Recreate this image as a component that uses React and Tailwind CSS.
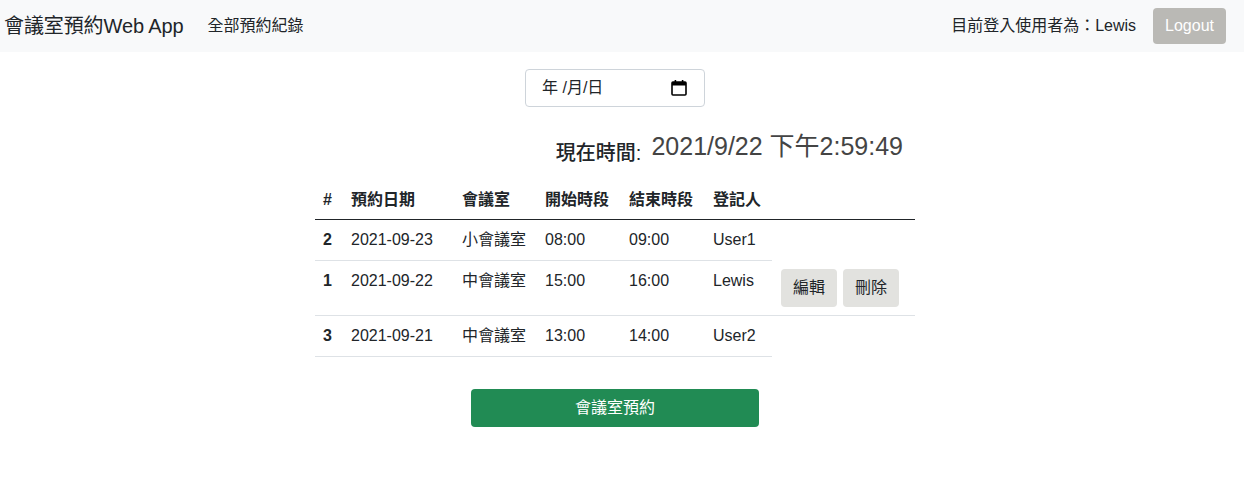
import React from "react"

const FONT = {
    fontFamily:
        '"Liberation Sans", "Noto Sans CJK TC", "Noto Sans CJK SC", sans-serif',
}

const rows = [
    { id: 2, date: "2021-09-23", room: "小會議室", start: "08:00", end: "09:00", user: "User1" },
    { id: 1, date: "2021-09-22", room: "中會議室", start: "15:00", end: "16:00", user: "Lewis", own: true },
    { id: 3, date: "2021-09-21", room: "中會議室", start: "13:00", end: "14:00", user: "User2" },
]

function CalendarIcon() {
    return (
        <svg width="18" height="18" viewBox="0 0 18 18" fill="none">
            <rect x="2" y="3" width="14" height="13" rx="1" stroke="#000" strokeWidth="1.6" />
            <rect x="2" y="3" width="14" height="3.5" fill="#000" />
            <rect x="4.6" y="1" width="1.6" height="3" fill="#000" />
            <rect x="11.8" y="1" width="1.6" height="3" fill="#000" />
        </svg>
    )
}

function Navbar() {
    return (
        <div className="h-[52px] bg-[#f8f9fa] flex items-center justify-between pl-[4px] pr-[18px]">
            <div className="flex items-center">
                <div className="text-[20px] text-[#212529] mr-[24px] tracking-[-0.1px]">會議室預約Web App</div>
                <div className="text-[16px] text-[#212529]">全部預約紀錄</div>
            </div>
            <div className="flex items-center">
                <div className="text-[16px] text-[#212529] mr-[17px]">目前登入使用者為：Lewis</div>
                <button className="h-[36px] px-[12px] rounded-[4px] bg-[#bab9b5] text-white text-[16px]">
                    Logout
                </button>
            </div>
        </div>
    )
}

export default function App() {
    const th = "text-left font-bold px-2 pt-2 pb-[7px] border-b border-[#212529] align-bottom"
    const td = "px-2 py-2 align-top border-b border-[#dee2e6]"
    return (
        <div style={FONT} className="bg-white min-h-[490px] text-[#212529]">
            <Navbar />
            <div className="flex flex-col items-center pr-[14px]">
                <div className="mt-[17px] w-[180px] h-[38px] border border-[#ced4da] rounded-[4px] flex items-center justify-between pl-[16px] pr-[16px]">
                    <span className="text-[16px]">年 /月/日</span>
                    <CalendarIcon />
                </div>
                <div className="w-[600px] flex justify-end items-end mt-[24px] pr-[12px] leading-[30px]">
                    <span className="text-[20px] font-medium mr-[10px] mb-[-7px]">現在時間:</span>
                    <span className="text-[25px] text-[#444]">2021/9/22 下午2:59:49</span>
                </div>
                <table className="w-[600px] table-fixed mt-[19px] text-[16px]">
                    <colgroup>
                        <col className="w-[28px]" />
                        <col className="w-[111px]" />
                        <col className="w-[83px]" />
                        <col className="w-[84px]" />
                        <col className="w-[84px]" />
                        <col className="w-[67px]" />
                        <col className="w-[143px]" />
                    </colgroup>
                    <thead>
                        <tr className="leading-[24px]">
                            <th className={th}>#</th>
                            <th className={th}>預約日期</th>
                            <th className={th}>會議室</th>
                            <th className={th}>開始時段</th>
                            <th className={th}>結束時段</th>
                            <th className={th}>登記人</th>
                            <th className={th}></th>
                        </tr>
                    </thead>
                    <tbody>
                        {rows.map((r) => (
                            <tr key={r.id} className="leading-[24px]">
                                <td className={td + " font-bold"}>{r.id}</td>
                                <td className={td}>{r.date}</td>
                                <td className={td}>{r.room}</td>
                                <td className={td}>{r.start}</td>
                                <td className={td}>{r.end}</td>
                                <td className={td}>{r.user}</td>
                                {r.own && (
                                    <td className="pl-[9px] py-2 border-b border-[#dee2e6] align-top">
                                        <div className="flex gap-[6px]">
                                            <button className="h-[38px] px-[12px] rounded-[4px] bg-[#e2e2df]">編輯</button>
                                            <button className="h-[38px] px-[12px] rounded-[4px] bg-[#e2e2df]">刪除</button>
                                        </div>
                                    </td>
                                )}
                            </tr>
                        ))}
                    </tbody>
                </table>
                <button className="mt-[32px] w-[288px] h-[38px] rounded-[4px] bg-[#218b54] text-white text-[16px]">
                    會議室預約
                </button>
            </div>
        </div>
    )
}
